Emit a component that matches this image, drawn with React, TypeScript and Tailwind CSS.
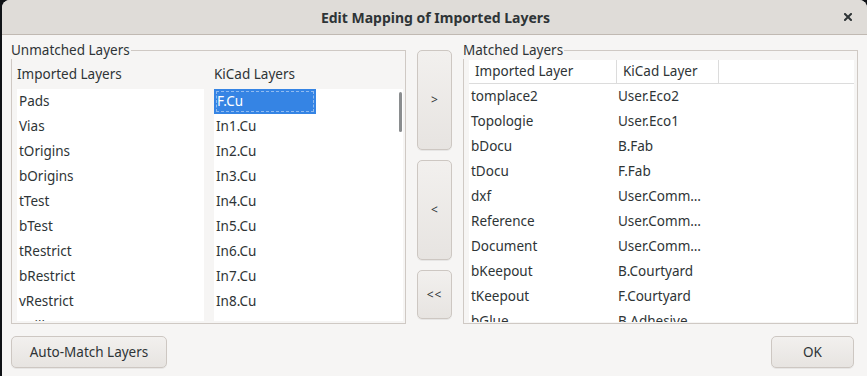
const unmatchedLayers = [
  'Pads',
  'Vias',
  'tOrigins',
  'bOrigins',
  'tTest',
  'bTest',
  'tRestrict',
  'bRestrict',
  'vRestrict',
  'Drills',
]

const kicadLayers = [
  'F.Cu',
  'In1.Cu',
  'In2.Cu',
  'In3.Cu',
  'In4.Cu',
  'In5.Cu',
  'In6.Cu',
  'In7.Cu',
  'In8.Cu',
  'In9.Cu',
]

const matchedLayers: [string, string][] = [
  ['tomplace2', 'User.Eco2'],
  ['Topologie', 'User.Eco1'],
  ['bDocu', 'B.Fab'],
  ['tDocu', 'F.Fab'],
  ['dxf', 'User.Comm…'],
  ['Reference', 'User.Comm…'],
  ['Document', 'User.Comm…'],
  ['bKeepout', 'B.Courtyard'],
  ['tKeepout', 'F.Courtyard'],
  ['bGlue', 'B.Adhesive'],
]

const font = { fontFamily: '"Noto Sans", "DejaVu Sans", sans-serif' }

const buttonClass =
  'flex items-center justify-center rounded-[5px] border border-[#cdc7c2] bg-gradient-to-b from-[#f2f0ee] to-[#e7e4e1] text-[#2e3436] shadow-[0_1px_0_rgba(0,0,0,0.06)]'

function GroupLabel({ children }: { children: string }) {
  return (
    <span className="absolute -left-[1px] -top-[10px] bg-[#f6f5f4] pr-[1px] leading-[18px] text-[#2e3436]">
      {children}
    </span>
  )
}

export default function App() {
  return (
    <div
      className="h-[376px] w-[867px] overflow-hidden bg-[#0f1216] text-[13.5px]"
      style={font}
    >
      <div className="ml-[2px] flex h-full flex-col rounded-t-[8px] bg-[#f6f5f4]">
        {/* title bar */}
        <div className="grid h-[35px] shrink-0 grid-cols-[1fr_auto_1fr] items-center rounded-t-[8px] border-b border-[#c0b9b2] bg-[#dfdcd8]">
          <div />
          <div className="pl-[2px] text-[14px] font-bold text-[#2e3436]">
            Edit Mapping of Imported Layers
          </div>
          <div className="flex justify-end pr-[15px]">
            <svg width="8" height="8" viewBox="0 0 8 8" aria-hidden="true">
              <path
                d="M1 1 7 7M7 1 1 7"
                stroke="#2e3436"
                strokeWidth="2"
                strokeLinecap="square"
              />
            </svg>
          </div>
        </div>

        <div className="mt-[15px] flex gap-[11px] pl-[9px]">
          {/* unmatched */}
          <div className="relative h-[274px] w-[395px] border border-[#cfc9c4] pl-[5px] pr-[2px]">
            <GroupLabel>Unmatched Layers</GroupLabel>
            <div className="grid grid-cols-[187px_1fr] gap-x-[10px]">
              <div className="pt-[14px] leading-[18px] text-[#2e3436]">
                Imported Layers
              </div>
              <div className="pt-[14px] leading-[18px] text-[#2e3436]">
                KiCad Layers
              </div>
              <div className="mt-[6px] h-[232px] overflow-hidden bg-white pl-[2px]">
                {unmatchedLayers.map((name) => (
                  <div
                    key={name}
                    className="flex h-[25px] items-center text-[#2e3436]"
                  >
                    {name}
                  </div>
                ))}
              </div>
              <div className="relative mt-[6px] h-[232px] overflow-hidden bg-white">
                {kicadLayers.map((name, i) =>
                  i === 0 ? (
                    <div
                      key={name}
                      className="flex h-[25px] w-[102px] items-center bg-[#3584e4] p-[2px] text-white"
                    >
                      <span className="flex h-full w-full items-center border border-dashed border-white/45">
                        {name}
                      </span>
                    </div>
                  ) : (
                    <div
                      key={name}
                      className="flex h-[25px] items-center pl-[2px] text-[#2e3436]"
                    >
                      {name}
                    </div>
                  ),
                )}
                <div className="absolute right-[1px] top-[3px] h-[40px] w-[3px] rounded-full bg-[#8a8d8f]" />
              </div>
            </div>
          </div>

          {/* move buttons */}
          <div className="flex w-[35px] flex-col gap-[10px]">
            <button type="button" className={`${buttonClass} h-[100px] text-[12px]`}>
              &gt;
            </button>
            <button type="button" className={`${buttonClass} h-[100px] text-[12px]`}>
              &lt;
            </button>
            <button type="button" className={`${buttonClass} h-[49px] text-[12px] tracking-[1px]`}>
              &lt;&lt;
            </button>
          </div>

          {/* matched */}
          <div className="relative h-[274px] w-[395px] border border-[#cfc9c4] pl-[5px] pr-[3px] pt-[9px]">
            <GroupLabel>Matched Layers</GroupLabel>
            <div className="h-[262px] overflow-hidden bg-white">
              <div className="grid h-[24px] grid-cols-[148px_102px_1fr] border-b border-[#dcdcdc] text-[#2e3436]">
                <div className="flex items-center border-r border-[#dcdcdc] pl-[6px]">
                  Imported Layer
                </div>
                <div className="flex items-center border-r border-[#dcdcdc] pl-[6px]">
                  KiCad Layer
                </div>
                <div />
              </div>
              {matchedLayers.map(([imported, kicad]) => (
                <div
                  key={imported}
                  className="grid h-[25px] grid-cols-[148px_1fr] items-center text-[#2e3436]"
                >
                  <span className="pl-[2px]">{imported}</span>
                  <span className="pl-[1px]">{kicad}</span>
                </div>
              ))}
            </div>
          </div>
        </div>

        <div className="mt-[12px] flex justify-between pl-[9px] pr-[13px]">
          <button type="button" className={`${buttonClass} h-[32px] w-[156px]`}>
            Auto-Match Layers
          </button>
          <button type="button" className={`${buttonClass} h-[32px] w-[83px]`}>
            OK
          </button>
        </div>
      </div>
    </div>
  )
}
